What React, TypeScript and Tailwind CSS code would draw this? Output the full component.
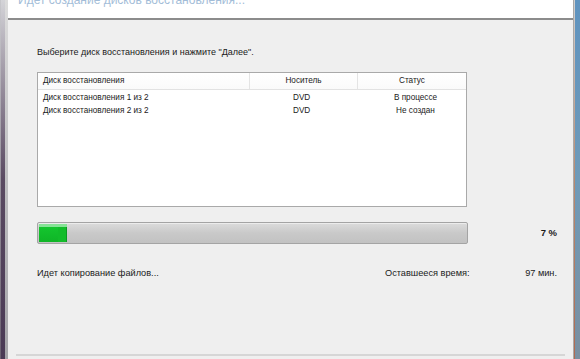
import React from "react";

const font = { fontFamily: '"Liberation Sans", Arial, sans-serif' };

export default function App() {
  return (
    <div
      className="w-[580px] h-[359px] flex overflow-hidden bg-[#efefef] text-[#1a1a1a]"
      style={font}
    >
      {/* left window frame */}
      <div className="w-[8px] h-full flex">
        <div className="w-[1px] h-full bg-gradient-to-b from-[#c8c8cc] to-[#6a6070]" />
        <div className="w-[4px] h-full bg-gradient-to-b from-[#d4d4d8] via-[#5a4a62] to-[#4a3a55]" />
        <div className="w-[3px] h-full bg-gradient-to-b from-[#dcdcdc] to-[#a4a4a8]" />
      </div>

      {/* main */}
      <div className="flex-1 flex flex-col h-full">
        {/* header */}
        <div className="h-[18px] bg-white overflow-hidden relative">
          <div className="absolute left-[10px] top-[-7px] text-[12px] leading-[14px] text-[#a3bdd8] whitespace-nowrap">
            Идет создание дисков восстановления...
          </div>
        </div>
        <div className="h-[2px] bg-[#8c8c8c]" />

        {/* body */}
        <div className="flex-1 flex flex-col pl-[29px] pr-[16px]">
          <div className="mt-[26px] h-[13px] text-[9px] leading-[13px] whitespace-nowrap">
            Выберите диск восстановления и нажмите "Далее".
          </div>

          {/* list */}
          <div className="mt-[13px] w-[430px] h-[135px] border border-[#a9a9a9] bg-white flex flex-col text-[8.2px]">
            <div className="h-[17px] flex border-b border-[#e2e2e2] bg-gradient-to-b from-white to-[#fafafa] leading-[16px]">
              <div className="w-[212px] pl-[5px] border-r border-[#e4e4e4]">Диск восстановления</div>
              <div className="w-[108px] text-center border-r border-[#e4e4e4]">Носитель</div>
              <div className="flex-1 text-center">Статус</div>
            </div>
            <div className="pt-[1px] flex flex-col leading-[13px]">
              <div className="flex h-[13px]">
                <div className="w-[213px] pl-[5px]">Диск восстановления 1 из 2</div>
                <div className="w-[108px] pl-[42px]">DVD</div>
                <div className="flex-1 text-center pl-[6px]">В процессе</div>
              </div>
              <div className="flex h-[13px]">
                <div className="w-[213px] pl-[5px]">Диск восстановления 2 из 2</div>
                <div className="w-[108px] pl-[42px]">DVD</div>
                <div className="flex-1 text-center pl-[6px]">Не создан</div>
              </div>
            </div>
          </div>

          {/* progress */}
          <div className="mt-[15px] flex items-center">
            <div className="w-[431px] h-[22px] rounded-[2px] border border-[#a4a4a4] bg-gradient-to-b from-[#dcdcdc] via-[#c9c9c9] to-[#c2c2c2] flex p-[1px] shadow-[inset_0_1px_0_#ececec]">
              <div className="w-[28px] h-full flex flex-col">
                <div className="h-[3px] bg-[#86e396]" />
                <div className="flex-1 flex bg-gradient-to-b from-[#14c52e] to-[#0fb527]">
                  <div className="w-[19px] h-full" />
                  <div className="w-[8px] h-full bg-[#12bc2a]" />
                  <div className="w-[1px] h-full bg-[#0a9a22]" />
                </div>
              </div>
            </div>
            <div className="flex-1 text-right text-[9.5px] font-bold whitespace-nowrap">7 %</div>
          </div>

          {/* status */}
          <div className="mt-[23px] flex text-[9.2px] leading-[13px] whitespace-nowrap">
            <div className="w-[348px]">Идет копирование файлов...</div>
            <div className="w-[130px]">Оставшееся время:</div>
            <div className="flex-1 text-right">97 мин.</div>
          </div>

          <div className="flex-1" />
        </div>
        <div className="h-[2px] mx-[8px] bg-[#d6d6d6]" />
        <div className="h-[3px]" />
      </div>

      {/* right window frame */}
      <div className="w-[7px] h-full flex">
        <div className="w-[1px] h-full bg-[#a8a8a8]" />
        <div className="w-[1px] h-full bg-gradient-to-b from-[#d0d0d0] via-[#b88a70] to-[#b06a50]" />
        <div className="w-[5px] h-full bg-gradient-to-b from-[#5f93bf] via-[#6f9ab8] to-[#7a8fa0]" />
      </div>
    </div>
  );
}
